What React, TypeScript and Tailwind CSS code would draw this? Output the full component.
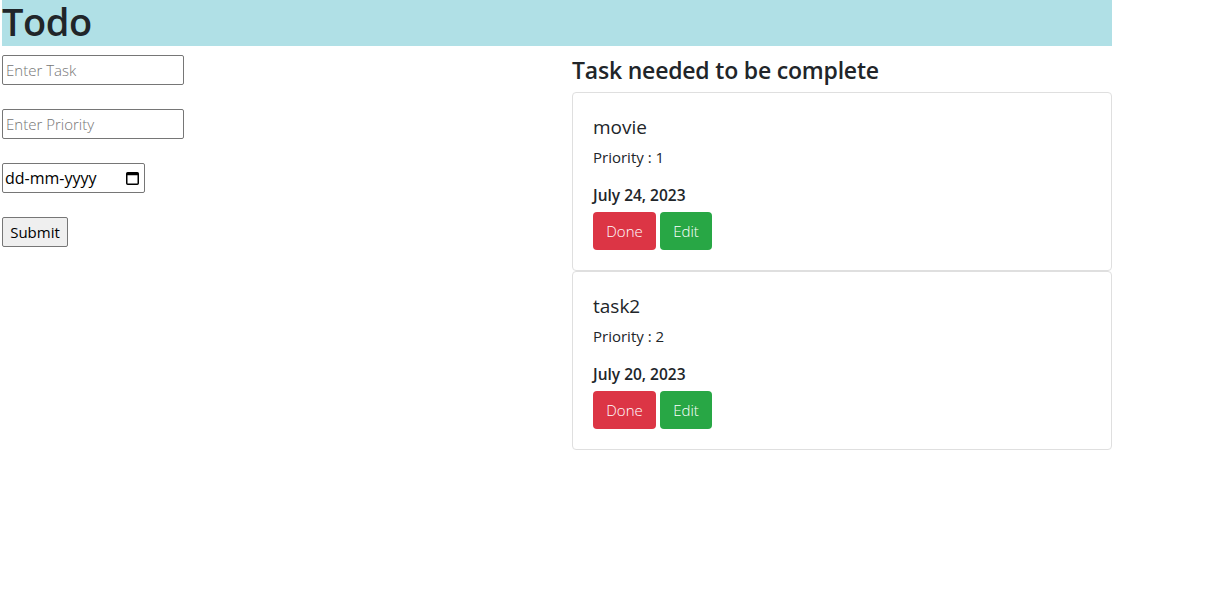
const tasks = [
  { title: "movie", priority: 1, date: "July 24, 2023" },
  { title: "task2", priority: 2, date: "July 20, 2023" },
];

function CalendarIcon() {
  return (
    <svg viewBox="0 0 13 14" className="h-[14px] w-[13px] shrink-0" aria-hidden="true">
      <rect x="0.75" y="1.75" width="11.5" height="11.5" rx="1" fill="none" stroke="#000" strokeWidth="1.5" />
      <rect x="0.75" y="1.75" width="11.5" height="2.5" fill="#000" />
    </svg>
  );
}

export default function App() {
  return (
    <div className="min-h-[600px] bg-white font-['Open_Sans',sans-serif] text-[#212529]">
      <div className="ml-[2px] w-[1110px]">
        {/* Heading */}
        <div className="h-[46px] bg-[#b0e0e6]">
          <h1 className="text-[38px] font-semibold leading-[42px] tracking-[-0.4px]">Todo</h1>
        </div>

        <div className="flex">
          {/* Left: form */}
          <div className="w-[570px] pt-[9px]">
            <form className="flex flex-col items-start gap-[24px]" onSubmit={(e) => e.preventDefault()}>
              <input
                type="text"
                placeholder="Enter Task"
                className="h-[30px] w-[182px] rounded-[2px] border border-[#767676] px-[3px] text-[15px] font-light placeholder:text-[#757575]"
              />
              <input
                type="text"
                placeholder="Enter Priority"
                className="h-[30px] w-[182px] rounded-[2px] border border-[#767676] px-[3px] text-[15px] font-light placeholder:text-[#757575]"
              />
              <label className="flex h-[30px] w-[143px] items-center rounded-[2px] border border-[#767676] pl-[2px] pr-[5px]">
                <input
                  type="text"
                  placeholder="dd-mm-yyyy"
                  className="w-0 min-w-0 flex-1 text-[16px] text-black outline-none placeholder:text-black"
                />
                <CalendarIcon />
              </label>
              <button
                type="submit"
                className="h-[30px] w-[66px] rounded-[2px] border border-[#767676] bg-[#efefef] text-[15px] text-black"
              >
                Submit
              </button>
            </form>
          </div>

          {/* Right: task list */}
          <div className="w-[540px]">
            <h4 className="mt-[10px] mb-[7px] text-[23px] font-semibold leading-[29px] tracking-[-0.2px]">
              Task needed to be complete
            </h4>
            {tasks.map((t) => (
              <div key={t.title} className="rounded-[4px] border border-[#dfdfdf] p-[20px]">
                <h5 className="mt-[2px] mb-[6px] text-[19px] font-medium leading-[24px]">{t.title}</h5>
                <p className="mb-[14px] text-[15px] leading-[24px]">Priority : {t.priority}</p>
                <p className="mb-[5px] text-[15.5px] font-semibold leading-[24px]">{t.date}</p>
                <div className="flex gap-[4px]">
                  <button className="h-[38px] w-[63px] rounded-[4px] bg-[#dc3545] text-[15px] font-light text-white">
                    Done
                  </button>
                  <button className="h-[38px] w-[52px] rounded-[4px] bg-[#28a745] text-[15px] font-light text-white">
                    Edit
                  </button>
                </div>
              </div>
            ))}
          </div>
        </div>
      </div>
    </div>
  );
}
